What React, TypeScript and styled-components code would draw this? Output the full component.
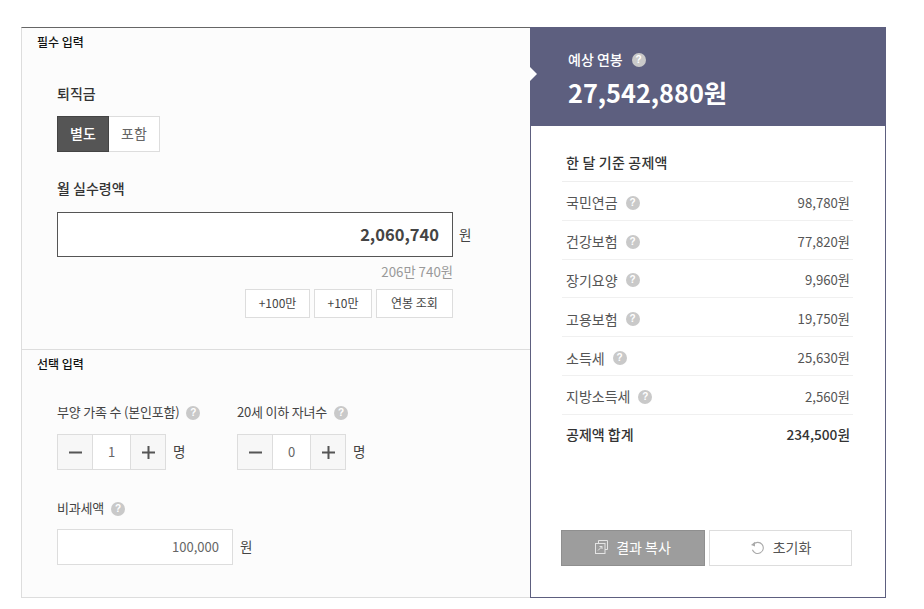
import { FC } from 'react';
import styled, { createGlobalStyle } from 'styled-components';

const Global = createGlobalStyle`
	html, body {
		margin: 0;
		padding: 0;
		background: #fff;
	}

	body {
		font-family: 'Noto Sans CJK KR', 'Noto Sans', sans-serif;
		font-size: 13px;
		color: #444;
	}

	* {
		box-sizing: border-box;
	}
`;

const Page = styled.div`
	width: 924px;
	height: 609px;
	padding: 27px 38px 11px 21px;
`;

const Card = styled.div`
	display: flex;
	height: 571px;
`;

const Left = styled.div`
	width: 509px;
	background: #fcfcfc;
	border-top: 1px solid #666;
	border-left: 1px solid #ddd;
	border-bottom: 1px solid #ddd;
	display: flex;
	flex-direction: column;
`;

const Section = styled.section<{ $h?: number }>`
	height: ${({ $h }) => ($h ? `${$h}px` : 'auto')};
	flex: ${({ $h }) => ($h ? 'none' : '1')};
	padding: 6px 35px 0 15px;

	& + & {
		border-top: 1px solid #ddd;
	}
`;

const SectionTitle = styled.h2`
	margin: 0;
	font-size: 12px;
	line-height: 16px;
	font-weight: 500;
	color: #111;
`;

const Body = styled.div`
	padding-left: 20px;
`;

const Help = styled.span`
	width: 14px;
	height: 14px;
	margin-top: 1px;
	border-radius: 50%;
	background: #c9c9c9;
	color: #fff;
	font-family: 'Liberation Sans', sans-serif;
	font-size: 10px;
	font-weight: 700;
	line-height: 14px;
	letter-spacing: 0;
	text-align: center;
	flex: none;
`;

const Label = styled.div<{ $mt: number }>`
	display: flex;
	align-items: center;
	gap: 7px;
	height: 20px;
	margin-top: ${({ $mt }) => $mt}px;
	padding-bottom: 2px;
	font-size: 13px;
	letter-spacing: -0.2px;
	color: #444;

	${Help} {
		margin-top: 3px;
	}
`;

const StrongLabel = styled.div<{ $mt: number }>`
	height: 20px;
	line-height: 20px;
	margin-top: ${({ $mt }) => $mt}px;
	font-size: 14px;
	font-weight: 500;
	color: #333;
`;

const Toggle = styled.div`
	display: flex;
	margin-top: 13px;
	height: 36px;
`;

const ToggleItem = styled.div<{ $on?: boolean; $w: number }>`
	width: ${({ $w }) => $w}px;
	display: flex;
	align-items: center;
	justify-content: center;
	padding-bottom: 2px;
	font-size: 14px;
	background: ${({ $on }) => ($on ? '#555' : '#fff')};
	color: ${({ $on }) => ($on ? '#fff' : '#666')};
	border: 1px solid ${({ $on }) => ($on ? '#444' : '#ddd')};
	border-left-width: ${({ $on }) => ($on ? 1 : 0)}px;
	font-weight: ${({ $on }) => ($on ? 500 : 400)};
`;

const InputRow = styled.div<{ $mt: number; $gap: number }>`
	display: flex;
	align-items: center;
	gap: ${({ $gap }) => $gap}px;
	margin-top: ${({ $mt }) => $mt}px;
`;

const Unit = styled.span`
	font-size: 13.5px;
	color: #444;
	padding-bottom: 2px;
`;

const Field = styled.div<{ $w: number; $h: number; $big?: boolean }>`
	width: ${({ $w }) => $w}px;
	height: ${({ $h }) => $h}px;
	display: flex;
	align-items: center;
	justify-content: flex-end;
	background: #fff;
	padding: 0 13px 2px 0;
	border: 1px solid ${({ $big }) => ($big ? '#555' : '#ddd')};
	font-size: ${({ $big }) => ($big ? 16.5 : 13)}px;
	font-weight: ${({ $big }) => ($big ? 700 : 400)};
	color: ${({ $big }) => ($big ? '#444' : '#666')};
`;

const Hint = styled.div`
	width: 396px;
	margin-top: 6px;
	height: 18px;
	line-height: 18px;
	text-align: right;
	font-size: 13.3px;
	color: #999;
`;

const Quick = styled.div`
	width: 396px;
	display: flex;
	justify-content: flex-end;
	gap: 4px;
	margin-top: 8px;
`;

const QuickButton = styled.div<{ $w: number }>`
	width: ${({ $w }) => $w}px;
	height: 29px;
	display: flex;
	align-items: center;
	justify-content: center;
	padding-bottom: 2px;
	background: #fff;
	border: 1px solid #ddd;
	font-size: 12px;
	color: #444;
`;

const Columns = styled.div`
	display: flex;
	margin-top: 30px;
`;

const Column = styled.div`
	width: 180px;
`;

const StepperRow = styled.div`
	display: flex;
	align-items: center;
	gap: 7px;
	margin-top: 12px;
`;

const Stepper = styled.div`
	width: 109px;
	height: 36px;
	display: flex;
	border: 1px solid #ddd;
	background: #fff;
`;

const StepButton = styled.div`
	width: 34px;
	display: flex;
	align-items: center;
	justify-content: center;
	background: #f7f7f7;
	color: #555;
`;

const StepValue = styled.div`
	flex: 1;
	display: flex;
	align-items: center;
	justify-content: center;
	padding-bottom: 2px;
	border-left: 1px solid #ddd;
	border-right: 1px solid #ddd;
	font-size: 13px;
	color: #666;
`;

const Right = styled.div`
	position: relative;
	width: 356px;
	background: #fff;
	border: 1px solid #5d5f7f;
	display: flex;
	flex-direction: column;
`;

const Arrow = styled.span`
	position: absolute;
	left: -1px;
	top: 39px;
	border-left: 7px solid #fff;
	border-top: 7px solid transparent;
	border-bottom: 7px solid transparent;
`;

const Summary = styled.div`
	height: 98px;
	background: #5d5f7f;
	padding: 21px 0 0 37px;
	color: #fff;
`;

const SummaryLabel = styled.div`
	display: flex;
	align-items: center;
	gap: 9px;
	height: 20px;
	font-size: 14px;
	font-weight: 500;
`;

const SummaryValue = styled.div`
	margin-top: 4px;
	font-size: 25.3px;
	line-height: 38px;
	font-weight: 700;
`;

const Details = styled.div`
	flex: 1;
	padding: 26px 32px 31px 31px;
	display: flex;
	flex-direction: column;
`;

const DetailsTitle = styled.div`
	height: 30px;
	padding: 0 0 9px 4px;
	line-height: 20px;
	font-size: 14px;
	letter-spacing: 0.2px;
	font-weight: 500;
	color: #333;
	border-bottom: 1px solid #eee;
`;

const Row = styled.div<{ $total?: boolean }>`
	display: flex;
	align-items: center;
	justify-content: space-between;
	height: 38.8px;
	padding: ${({ $total }) => ($total ? 0 : 3)}px 3px 0 4px;
	font-size: 14px;
	color: ${({ $total }) => ($total ? '#333' : '#555')};
	font-weight: ${({ $total }) => ($total ? 500 : 400)};
	border-bottom: ${({ $total }) => ($total ? 'none' : '1px solid #f0f0f0')};
`;

const RowName = styled.span`
	display: flex;
	align-items: center;
	gap: 8px;
`;

const Amount = styled.span<{ $total?: boolean }>`
	font-size: ${({ $total }) => ($total ? 13.7 : 13.2)}px;
`;

const Actions = styled.div`
	display: flex;
	gap: 4px;
	margin: auto 0 0 -1px;
`;

const ActionButton = styled.div<{ $primary?: boolean; $w: number }>`
	width: ${({ $w }) => $w}px;
	height: 36px;
	display: flex;
	align-items: center;
	justify-content: center;
	gap: 8px;
	padding-bottom: 2px;
	font-size: 14px;
	background: ${({ $primary }) => ($primary ? '#9d9d9d' : '#fff')};
	color: ${({ $primary }) => ($primary ? '#fff' : '#555')};
	border: 1px solid ${({ $primary }) => ($primary ? '#8f8f8f' : '#ddd')};
`;

const Minus = () => (
	<svg width='15' height='15' viewBox='0 0 15 15'>
		<rect x='1' y='6.5' width='13' height='2' fill='currentColor' />
	</svg>
);

const Plus = () => (
	<svg width='15' height='15' viewBox='0 0 15 15'>
		<rect x='1' y='6.5' width='13' height='2' fill='currentColor' />
		<rect x='6.5' y='1' width='2' height='13' fill='currentColor' />
	</svg>
);

const CopyIcon = () => (
	<svg width='13' height='14' viewBox='0 0 13 14' fill='none' stroke='#e4e4e4' strokeWidth='1'>
		<path d='M3.5 3V.5h9v9H10' />
		<rect x='.5' y='3.5' width='9.5' height='10' />
		<path d='M3 10.5l4-4M4.5 6.5H7V9' />
	</svg>
);

const ResetIcon = () => (
	<svg width='15' height='15' viewBox='0 0 15 15' fill='none'>
		<path d='M3.5 4.2A5.6 5.6 0 1 1 2.4 9.8' stroke='#aaa' strokeWidth='1.1' />
		<path d='M1 5l4-3.2v4.6z' fill='#aaa' />
	</svg>
);

const Step: FC<{ value: number }> = ({ value }) => (
	<StepperRow>
		<Stepper>
			<StepButton>
				<Minus />
			</StepButton>
			<StepValue>{value}</StepValue>
			<StepButton>
				<Plus />
			</StepButton>
		</Stepper>
		<Unit>명</Unit>
	</StepperRow>
);

const deductions: [string, string][] = [
	['국민연금', '98,780원'],
	['건강보험', '77,820원'],
	['장기요양', '9,960원'],
	['고용보험', '19,750원'],
	['소득세', '25,630원'],
	['지방소득세', '2,560원'],
];

const App: FC = () => (
	<Page>
		<Global />
		<Card>
			<Left>
				<Section $h={321}>
					<SectionTitle>필수 입력</SectionTitle>
					<Body>
						<StrongLabel $mt={33}>퇴직금</StrongLabel>
						<Toggle>
							<ToggleItem $on $w={52}>
								별도
							</ToggleItem>
							<ToggleItem $w={51}>포함</ToggleItem>
						</Toggle>
						<StrongLabel $mt={26}>월 실수령액</StrongLabel>
						<InputRow $mt={14} $gap={6}>
							<Field $big $w={396} $h={45}>
								2,060,740
							</Field>
							<Unit>원</Unit>
						</InputRow>
						<Hint>206만 740원</Hint>
						<Quick>
							<QuickButton $w={65}>+100만</QuickButton>
							<QuickButton $w={58}>+10만</QuickButton>
							<QuickButton $w={77}>연봉 조회</QuickButton>
						</Quick>
					</Body>
				</Section>
				<Section>
					<SectionTitle>선택 입력</SectionTitle>
					<Body>
						<Columns>
							<Column>
								<Label $mt={0}>
									부양 가족 수 (본인포함) <Help>?</Help>
								</Label>
								<Step value={1} />
							</Column>
							<Column>
								<Label $mt={0}>
									20세 이하 자녀수 <Help>?</Help>
								</Label>
								<Step value={0} />
							</Column>
						</Columns>
						<Label $mt={28}>
							비과세액 <Help>?</Help>
						</Label>
						<InputRow $mt={11} $gap={7}>
							<Field $w={176} $h={36}>
								100,000
							</Field>
							<Unit>원</Unit>
						</InputRow>
					</Body>
				</Section>
			</Left>
			<Right>
				<Arrow />
				<Summary>
					<SummaryLabel>
						예상 연봉 <Help>?</Help>
					</SummaryLabel>
					<SummaryValue>27,542,880원</SummaryValue>
				</Summary>
				<Details>
					<DetailsTitle>한 달 기준 공제액</DetailsTitle>
					{deductions.map(([name, amount]) => (
						<Row key={name}>
							<RowName>
								{name} <Help>?</Help>
							</RowName>
							<Amount>{amount}</Amount>
						</Row>
					))}
					<Row $total>
						<span>공제액 합계</span>
						<Amount $total>234,500원</Amount>
					</Row>
					<Actions>
						<ActionButton $primary $w={144}>
							<CopyIcon />
							결과 복사
						</ActionButton>
						<ActionButton $w={143}>
							<ResetIcon />
							초기화
						</ActionButton>
					</Actions>
				</Details>
			</Right>
		</Card>
	</Page>
);

export default App;
